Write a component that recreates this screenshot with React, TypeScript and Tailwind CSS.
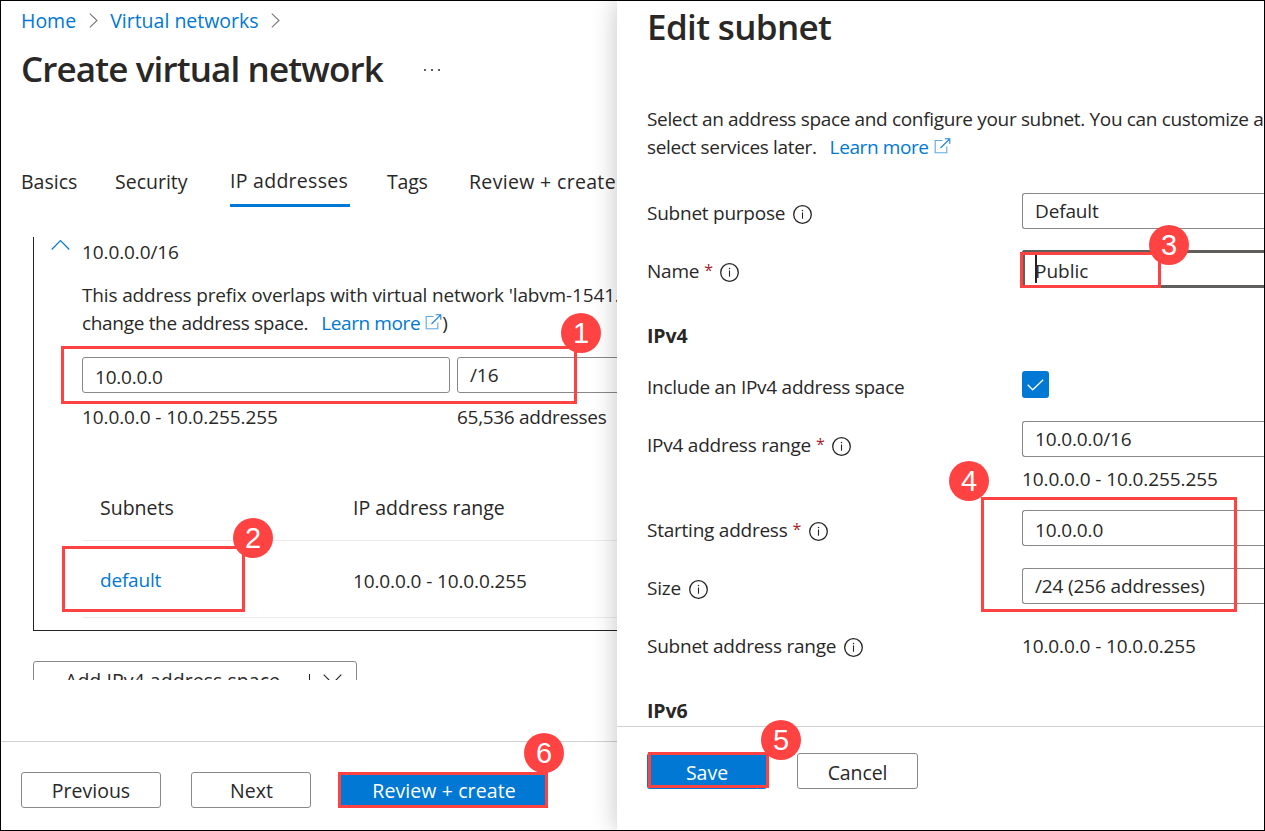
import type { ReactNode } from "react";

function ExternalIcon({ className = "" }: { className?: string }) {
  return (
    <svg className={`inline-block h-4 w-[17px] shrink-0 ${className}`} viewBox="0 0 17 16" fill="none">
      <path d="M8.5 2.5H1.2v12.3h11.6V8.5" stroke="#5ea9e2" strokeWidth="1.1" />
      <path d="M6.5 10 15.6 1M10.8.8h5v5" stroke="#1f86d9" strokeWidth="1.1" />
    </svg>
  );
}

function InfoIcon() {
  return (
    <svg className="h-[19px] w-[19px] shrink-0" viewBox="0 0 19 19" fill="none">
      <circle cx="9.5" cy="9.5" r="8.8" stroke="#242322" strokeWidth="1.3" />
      <path d="M9.5 7.5v6.2" stroke="#242322" strokeWidth="1.1" />
      <path d="M9.5 4.9v1.3" stroke="#242322" strokeWidth="1.3" />
    </svg>
  );
}

function BreadcrumbChevron({ className }: { className: string }) {
  return (
    <svg className={`h-[15px] w-[9px] shrink-0 ${className}`} viewBox="0 0 9 15" fill="none">
      <path d="m.8.6 7.2 6.9-7.2 6.9" stroke="#797775" strokeWidth="1.1" />
    </svg>
  );
}

function Badge({ n, className }: { n: number; className: string }) {
  return (
    <div
      className={`absolute flex h-10 w-10 items-center justify-center rounded-full bg-[#ff4343] font-['Liberation_Sans',sans-serif] text-[29px] leading-none text-white ${className}`}
    >
      {n}
    </div>
  );
}

function Frame({ className }: { className: string }) {
  return <div className={`absolute border-[3px] border-[#ff4343] ${className}`} />;
}

function Label({
  children,
  required,
  info,
  className = "pt-[3px]",
}: {
  children: ReactNode;
  required?: boolean;
  info?: boolean;
  className?: string;
}) {
  return (
    <div className={`flex w-[375px] shrink-0 items-center text-[19px] tracking-[-0.24px] ${className}`}>
      <span>{children}</span>
      {required && <span className="-mt-[2px] ml-[5px] w-2 text-[16px] text-[#a4262c]">*</span>}
      {info && (
        <span className="ml-[8px] pt-[3px]">
          <InfoIcon />
        </span>
      )}
    </div>
  );
}

function Field({ children, className = "" }: { children: ReactNode; className?: string }) {
  return (
    <div
      className={`flex h-9 flex-1 items-center rounded-l-[3px] border border-r-0 border-[#8a8886] pl-3 text-[19px] tracking-[-0.14px] ${className}`}
    >
      {children}
    </div>
  );
}

function CreatePanel() {
  return (
    <section className="flex w-[616px] shrink-0 flex-col overflow-hidden">
      <nav className="mt-[6px] flex h-7 items-center pl-5 text-[#0078d4]">
        <span>Home</span>
        <BreadcrumbChevron className="-mt-[2px] ml-[13px]" />
        <span className="ml-3">Virtual networks</span>
        <BreadcrumbChevron className="-mt-[2px] ml-3" />
      </nav>
      <header className="mt-[10px] flex h-12 items-center pl-5">
        <h1 className="text-[35px] leading-[48px] font-semibold tracking-[-0.87px]">Create virtual network</h1>
        <span className="ml-[41px] flex gap-[5px] pt-[2px]">
          <i className="size-[2px] bg-[#605e5c]" />
          <i className="size-[2px] bg-[#605e5c]" />
          <i className="size-[2px] bg-[#605e5c]" />
        </span>
      </header>
      <div className="mt-[75px] flex h-[39px] pl-5 whitespace-nowrap">
        <span className="w-[94px]">Basics</span>
        <span className="w-[115px]">Security</span>
        <span className="-mt-px mr-[37px] h-[40px] w-[120px] border-b-[3px] border-[#0078d4] tracking-[0.28px]">IP addresses</span>
        <span className="w-[82px] tracking-[-0.2px]">Tags</span>
        <span className="tracking-[0.33px]">Review + create</span>
      </div>

      <div className="mt-[30px] h-[443px] overflow-hidden pl-8">
        <div className="flex h-[394px] border-b border-l border-[#242322] pl-[17px]">
          <svg className="mt-[2px] h-3 w-[19px] shrink-0" viewBox="0 0 19 12" fill="none">
            <path d="m.7 10.5 8.8-8.8 8.8 8.8" stroke="#0078d4" strokeWidth="1.2" />
          </svg>
          <div className="ml-[12px] w-[700px] shrink-0 whitespace-nowrap">
            <div className="mt-[1px] text-[19px] tracking-[-0.1px]">10.0.0.0/16</div>
            <p className="mt-[15px] text-[19px] tracking-[-0.32px]">
              <span className="tracking-[-0.15px]">This address prefix overlaps with virtual network 'labvm-1541.</span>
              <br />
              <span className="flex items-center">
                change the address space.
                <span className="ml-[13px] tracking-[-0.4px] text-[#0078d4]">Learn more</span>
                <ExternalIcon className="-mt-[2px] ml-[5px]" />)
              </span>
            </p>
            <div className="mt-[20px] flex gap-[7px] text-[19px] tracking-[-0.1px]">
              <div className="flex h-9 w-[368px] items-center rounded-[3px] border border-[#8a8886] pt-[3px] pl-3 tracking-[-0.2px]">10.0.0.0</div>
              <div className="flex h-9 flex-1 items-center rounded-[3px] border border-[#8a8886] pl-3">/16</div>
            </div>
            <div className="mt-[10px] flex text-[19px]">
              <span className="w-[375px] tracking-[-0.1px]">10.0.0.0 - 10.0.255.255</span>
              <span className="tracking-[-0.3px]">65,536 addresses</span>
            </div>
            <div className="mt-[63px] flex h-[47px] border-b border-[#edebe9] pl-[18px]">
              <span className="w-[253px]">Subnets</span>
              <span>IP address range</span>
            </div>
            <div className="flex h-[77px] items-center border-b border-[#edebe9] pl-[18px]">
              <span className="w-[253px] pt-[2px] text-[19px] tracking-[-0.2px] text-[#0078d4]">default</span>
              <span className="pt-[3px] text-[19px] tracking-[-0.12px]">10.0.0.0 - 10.0.0.255</span>
            </div>
          </div>
        </div>
        <div className="mt-[30px] flex h-10 w-[324px] rounded-[3px] border border-[#8a8886] pt-[5px] pl-[31px] font-medium">
          <span className="w-[244px] tracking-[0.05px]">Add IPv4 address space</span>
          <span className="mt-[7px] h-4 w-px bg-[#242322]" />
          <svg className="mt-[7px] ml-[13px] h-[11px] w-[19px]" viewBox="0 0 19 11" fill="none">
            <path d="m.7.7 8.8 8.8L18.3.7" stroke="#242322" strokeWidth="1.1" />
          </svg>
        </div>
      </div>

      <footer className="mt-[61px] flex h-[89px] border-t border-[#d2d0ce] pt-[30px] pl-5 font-medium">
        <div className="flex h-9 w-[140px] items-center justify-center rounded-[3px] border border-[#8a8886] pt-[2px]">Previous</div>
        <div className="ml-[30px] flex h-9 w-[120px] items-center justify-center rounded-[3px] border border-[#8a8886] pt-[2px] pl-[1px]">Next</div>
        <div className="ml-7 flex h-9 w-[208px] items-center justify-center bg-[#0078d4] pt-[2px] pl-[2px] tracking-[0.1px] text-white">
          Review + create
        </div>
      </footer>
    </section>
  );
}

function SubnetPanel() {
  return (
    <section className="relative flex min-w-0 flex-1 flex-col overflow-visible bg-white shadow-[0_0_24px_rgba(0,0,0,0.24)]">
      <div className="flex h-[725px] flex-col overflow-hidden pl-[30px] whitespace-nowrap">
        <h2 className="mt-[1px] text-[35px] leading-[50px] font-semibold tracking-[-0.65px]">Edit subnet</h2>
        <p className="mt-[53px] text-[19px] tracking-[-0.34px]">
          Select an address space and configure your subnet. You can customize as
          <br />
          <span className="flex items-center">
            select services later.
            <span className="ml-[13px] tracking-[-0.4px] text-[#0078d4]">Learn more</span>
            <ExternalIcon className="-mt-[2px] ml-[5px]" />
          </span>
        </p>

        <div className="mt-[32px] flex h-9">
          <Label info>Subnet purpose</Label>
          <Field>Default</Field>
        </div>
        <div className="mt-[21px] flex h-[38px]">
          <Label required info>Name</Label>
          <div className="flex flex-1 items-center rounded-l-[3px] border-[3px] border-r-0 border-[#605e5c] pt-[3px] pl-[10px]">
            <span className="-mt-[4px] h-7 w-[2px] bg-[#242322]" />
            <span className="-ml-[2px] text-[19px]">Public</span>
          </div>
        </div>
        <h3 className="mt-[34px] font-bold tracking-[-0.1px]">IPv4</h3>
        <div className="mt-[21px] flex h-[30px]">
          <Label className="pt-[1px]">
            <span className="tracking-[-0.27px]">Include an IPv4 address space</span>
          </Label>
          <div className="flex size-[27px] items-center justify-center rounded-[3px] bg-[#0078d4]">
            <svg className="h-3 w-[17px]" viewBox="0 0 17 12" fill="none">
              <path d="m.7 5.8 5 5L16.2.8" stroke="#fff" strokeWidth="1.3" />
            </svg>
          </div>
        </div>
        <div className="mt-5 flex h-9">
          <Label required info className="pt-[12px]">IPv4 address range</Label>
          <Field>10.0.0.0/16</Field>
        </div>
        <div className="mt-[8px] pl-[375px] text-[19px] tracking-[-0.1px]">10.0.0.0 - 10.0.255.255</div>
        <div className="mt-[17px] flex h-9">
          <Label required info className="pt-[4px]">Starting address</Label>
          <Field className="pt-[3px]">10.0.0.0</Field>
        </div>
        <div className="mt-[22px] flex h-9">
          <Label info>Size</Label>
          <Field>/24 (256 addresses)</Field>
        </div>
        <div className="mt-[22px] flex h-9">
          <Label info>Subnet address range</Label>
          <div className="flex items-center pt-[3px] text-[19px] tracking-[-0.12px]">10.0.0.0 - 10.0.0.255</div>
        </div>
        <h3 className="mt-[35px] font-bold tracking-[-0.1px]">IPv6</h3>
      </div>
      <footer className="flex h-[104px] border-t border-[#d2d0ce] pt-[26px] pl-[30px] font-medium">
        <div className="flex h-9 w-[120px] items-center justify-center rounded-[3px] bg-[#0078d4] pt-[3px] text-white">Save</div>
        <div className="ml-[30px] flex h-9 w-[121px] items-center justify-center rounded-[3px] border border-[#8a8886] pt-[3px] tracking-[-0.1px]">Cancel</div>
      </footer>
    </section>
  );
}

export default function App() {
  return (
    <main className="relative flex h-[831px] w-[1265px] overflow-hidden border border-black bg-white font-['Open_Sans',sans-serif] text-[19.5px] leading-7 text-[#292827]">
      <CreatePanel />
      <div className="flex min-w-0 flex-1 overflow-visible">
        <SubnetPanel />
      </div>

      <Frame className="top-[345px] left-[60px] h-[58px] w-[516px]" />
      <Frame className="top-[545px] left-[61px] h-[66px] w-[183px]" />
      <Frame className="top-[251px] left-[1019px] h-[36px] w-[141px]" />
      <Frame className="top-[496px] left-[980px] h-[115px] w-[256px]" />
      <Frame className="top-[751px] left-[647px] h-[36px] w-[121px]" />
      <Frame className="top-[771px] left-[337px] h-[36px] w-[210px]" />
      <Badge n={1} className="top-[312px] left-[560px]" />
      <Badge n={2} className="top-[517px] left-[232px]" />
      <Badge n={3} className="top-[224px] left-[1148px]" />
      <Badge n={4} className="top-[460px] left-[948px]" />
      <Badge n={5} className="top-[719px] left-[760px]" />
      <Badge n={6} className="top-[732px] left-[523px]" />
    </main>
  );
}
